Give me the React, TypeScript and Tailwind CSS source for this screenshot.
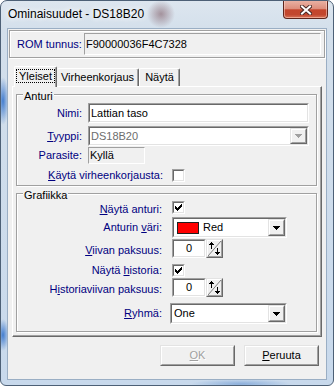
import React from "react";

const etched =
  "border border-[#a0a0a0] shadow-[1px_1px_0_#ffffff,inset_1px_1px_0_#ffffff]";

function U({ children }: { children: React.ReactNode }) {
  return <span className="underline decoration-1 underline-offset-[1px]">{children}</span>;
}

function Sunken({
  className = "",
  inner = "",
  children,
}: {
  className?: string;
  inner?: string;
  children?: React.ReactNode;
}) {
  return (
    <div
      className={`border border-t-[#a0a0a0] border-l-[#a0a0a0] border-r-white border-b-white ${className}`}
    >
      <div
        className={`w-full h-full border border-t-[#696969] border-l-[#696969] border-r-[#e3e3e3] border-b-[#e3e3e3] flex items-center ${inner}`}
      >
        {children}
      </div>
    </div>
  );
}

function Raised({
  className = "",
  children,
}: {
  className?: string;
  children?: React.ReactNode;
}) {
  return (
    <div
      className={`border border-t-[#e3e3e3] border-l-[#e3e3e3] border-r-[#696969] border-b-[#696969] bg-[#f0f0f0] ${className}`}
    >
      <div className="w-full h-full border border-t-white border-l-white border-r-[#a0a0a0] border-b-[#a0a0a0] flex items-center justify-center">
        {children}
      </div>
    </div>
  );
}

function Arrow({ color = "#000000" }: { color?: string }) {
  return (
    <svg width="7" height="4" viewBox="0 0 7 4" shapeRendering="crispEdges">
      <rect x="0" y="0" width="7" height="1" fill={color} />
      <rect x="1" y="1" width="5" height="1" fill={color} />
      <rect x="2" y="2" width="3" height="1" fill={color} />
      <rect x="3" y="3" width="1" height="1" fill={color} />
    </svg>
  );
}

function Check({ checked }: { checked?: boolean }) {
  return (
    <Sunken className="w-[13px] h-[13px] bg-white" inner="justify-center">
      {checked && (
        <svg width="7" height="7" viewBox="0 0 7 7" shapeRendering="crispEdges">
          <rect x="6" y="0" width="1" height="1" fill="#000" />
          <rect x="5" y="1" width="2" height="1" fill="#000" />
          <rect x="0" y="2" width="1" height="1" fill="#000" />
          <rect x="4" y="2" width="3" height="1" fill="#000" />
          <rect x="0" y="3" width="2" height="1" fill="#000" />
          <rect x="3" y="3" width="3" height="1" fill="#000" />
          <rect x="0" y="4" width="5" height="1" fill="#000" />
          <rect x="1" y="5" width="3" height="1" fill="#000" />
          <rect x="2" y="6" width="1" height="1" fill="#000" />
        </svg>
      )}
    </Sunken>
  );
}

function Spin({ value }: { value: string }) {
  return (
    <div className="flex h-[19px]">
      <Sunken className="w-[34px] h-[19px] bg-white" inner="justify-center">
        <span>{value}</span>
      </Sunken>
      <Raised className="w-[17px] h-[19px]">
        <svg width="13" height="15" viewBox="0 0 13 15" shapeRendering="crispEdges">
          <line x1="0" y1="15" x2="13" y2="0" stroke="#808080" strokeWidth="1" shapeRendering="auto" />
          <rect x="3" y="1" width="1" height="1" fill="#000" />
          <rect x="2" y="2" width="3" height="1" fill="#000" />
          <rect x="1" y="3" width="5" height="1" fill="#000" />
          <rect x="3" y="4" width="1" height="4" fill="#000" />
          <rect x="9" y="7" width="1" height="4" fill="#000" />
          <rect x="7" y="11" width="5" height="1" fill="#000" />
          <rect x="8" y="12" width="3" height="1" fill="#000" />
          <rect x="9" y="13" width="1" height="1" fill="#000" />
        </svg>
      </Raised>
    </div>
  );
}

function Group({
  title,
  className = "",
  children,
}: {
  title: string;
  className?: string;
  children?: React.ReactNode;
}) {
  return (
    <div className={`relative flex flex-col ${etched} ${className}`}>
      <div className="absolute left-[6px] -top-[5px] px-[1px] bg-[#f0f0f0] leading-[13px]">
        {title}
      </div>
      {children}
    </div>
  );
}

const label = "text-right text-[#000080] shrink-0";

export default function App() {
  return (
    <div className="w-[334px] h-[386px] font-['Liberation_Sans',Arial,sans-serif] text-[11px] leading-[13px] text-black">
      <div className="w-full h-full flex flex-col rounded-t-[7px] rounded-b-[6px] border border-[#4d6076] overflow-hidden [background:radial-gradient(ellipse_14px_14px_at_160px_13px,rgba(120,80,90,0.55),transparent),radial-gradient(ellipse_6px_24px_at_2px_100px,rgba(60,120,205,0.95),transparent),radial-gradient(ellipse_6px_16px_at_2px_334px,rgba(60,120,205,0.95),transparent),radial-gradient(ellipse_50px_5px_at_240px_383px,rgba(90,140,205,0.55),transparent),linear-gradient(180deg,#dde6ef_0px,#d3dfeb_30px,#c8d9ec_100%)]">
        {/* Title bar */}
        <div className="h-[28px] flex items-start shrink-0">
          <div className="pl-[7px] pt-[6px] text-[12px] leading-[14px] text-black [text-shadow:0_0_6px_#ffffff,0_0_6px_#ffffff]">
            Ominaisuudet - DS18B20
          </div>
          <div className="ml-auto mr-[5px] w-[45px] h-[18px] rounded-b-[4px] border border-t-0 border-[#5e251c] flex items-center justify-center [background:linear-gradient(180deg,#e9b0a2_0%,#dd8e7c_45%,#c4452c_52%,#c2472e_80%,#d7735a_100%)] shadow-[inset_0_-1px_0_rgba(255,200,180,0.6),inset_1px_0_0_rgba(255,220,210,0.5),inset_-1px_0_0_rgba(255,220,210,0.5)]">
            <svg width="12" height="10" viewBox="0 0 12 10">
              <path d="M2 1.5 L10 8.5 M10 1.5 L2 8.5" stroke="#4a2a26" strokeWidth="4" strokeLinecap="square" />
              <path d="M2 1.5 L10 8.5 M10 1.5 L2 8.5" stroke="#ffffff" strokeWidth="2" strokeLinecap="square" />
            </svg>
          </div>
        </div>

        {/* Client area */}
        <div className="mx-[7px] h-[350px] shrink-0 bg-[#f0f0f0] flex flex-col shadow-[0_0_0_1px_#9aaec4]">
          {/* ROM panel */}
          <div className={`mt-[1px] mx-[1px] h-[28px] flex items-center pl-[7px] ${etched}`}>
            <div className="w-[67px] text-[#000080] shrink-0">ROM tunnus:</div>
            <div className="w-[237px] h-[22px] border border-t-[#a0a0a0] border-l-[#a0a0a0] border-r-white border-b-white flex items-center pl-[1px]">
              F90000036F4C7328
            </div>
          </div>

          {/* Tabs */}
          <div className="mt-[8px] ml-[4px] h-[20px] flex items-end pl-[2px]">
            <div className="relative z-10 -mb-[1px] w-[43px] h-[21px] bg-[#f0f0f0] rounded-t-[2px] border-t border-l border-r border-t-white border-l-white border-r-[#696969] shadow-[inset_-1px_0_0_#a0a0a0] flex items-start justify-center pt-[2px]">
              <div className="border border-dotted border-black px-[2px] h-[14px] leading-[12px]">Yleiset</div>
            </div>
            <div className="w-[82px] h-[18px] rounded-t-[2px] border-t border-r border-t-white border-r-[#696969] shadow-[inset_-1px_0_0_#a0a0a0] flex items-center justify-center">
              Virheenkorjaus
            </div>
            <div className="w-[41px] h-[18px] rounded-t-[2px] border-t border-l border-r border-t-white border-l-white border-r-[#696969] shadow-[inset_-1px_0_0_#a0a0a0] flex items-center justify-center">
              Näytä
            </div>
          </div>

          {/* Tab panel */}
          <div className="ml-[4px] w-[310px] h-[251px] shrink-0 border border-t-white border-l-white border-r-[#696969] border-b-[#696969] shadow-[inset_-1px_-1px_0_#a0a0a0] flex flex-col">
            <Group title="Anturi" className="ml-[3px] mt-[7px] w-[301px] h-[92px] shrink-0">
              <div className="mt-[8px] h-[20px] flex items-center">
                <div className={`${label} w-[65px]`}>Nimi:</div>
                <Sunken className="ml-[6px] w-[221px] h-[20px] bg-white" inner="pl-[1px]">
                  Lattian taso
                </Sunken>
              </div>
              <div className="mt-[3px] h-[20px] flex items-center">
                <div className={`${label} w-[65px]`}>
                  <U>T</U>yyppi:
                </div>
                <Sunken className="ml-[6px] w-[221px] h-[20px] bg-white" inner="pl-[1px]">
                  <span className="text-[#6d6d6d]">DS18B20</span>
                  <Raised className="ml-auto w-[17px] h-[16px]">
                    <Arrow color="#a0a0a0" />
                  </Raised>
                </Sunken>
              </div>
              <div className="mt-[1px] h-[17px] flex items-center">
                <div className={`${label} w-[65px]`}>Parasite:</div>
                <div className="ml-[6px] w-[57px] h-[17px] border border-t-[#a0a0a0] border-l-[#a0a0a0] border-r-white border-b-white flex items-center pl-[1px]">
                  Kyllä
                </div>
              </div>
              <div className="mt-[5px] h-[13px] flex items-center">
                <div className={`${label} w-[146px]`}>
                  <U>K</U>äytä virheenkorjausta:
                </div>
                <div className="ml-[9px]">
                  <Check />
                </div>
              </div>
            </Group>

            <Group title="Grafiikka" className="ml-[3px] mt-[7px] w-[301px] h-[139px] shrink-0">
              <div className="mt-[7px] h-[13px] flex items-center">
                <div className={`${label} w-[145px] pt-[3px]`}>
                  <U>N</U>äytä anturi:
                </div>
                <div className="ml-[10px]">
                  <Check checked />
                </div>
              </div>
              <div className="mt-[3px] h-[21px] flex items-center">
                <div className={`${label} w-[145px]`}>
                  Anturin <U>v</U>äri:
                </div>
                <Sunken className="ml-[10px] w-[115px] h-[21px] bg-white">
                  <div className="ml-[3px] w-[22px] h-[12px] bg-[#ff0000] border border-[#202020]" />
                  <span className="ml-[4px]">Red</span>
                  <Raised className="ml-auto w-[17px] h-[17px]">
                    <Arrow />
                  </Raised>
                </Sunken>
              </div>
              <div className="mt-[1px] h-[19px] flex items-center">
                <div className={`${label} w-[145px] pt-[3px]`}>
                  <U>V</U>iivan paksuus:
                </div>
                <div className="ml-[10px]">
                  <Spin value="0" />
                </div>
              </div>
              <div className="mt-[6px] h-[13px] flex items-center">
                <div className={`${label} w-[145px]`}>
                  Näytä <U>h</U>istoria:
                </div>
                <div className="ml-[10px]">
                  <Check checked />
                </div>
              </div>
              <div className="mt-[1px] h-[19px] flex items-center">
                <div className={`${label} w-[145px] pt-[4px]`}>
                  H<U>i</U>storiaviivan paksuus:
                </div>
                <div className="ml-[10px]">
                  <Spin value="0" />
                </div>
              </div>
              <div className="mt-[6px] h-[21px] flex items-center">
                <div className={`${label} w-[145px]`}>
                  <U>R</U>yhmä:
                </div>
                <Sunken className="ml-[8px] w-[117px] h-[21px] bg-white" inner="pl-[2px]">
                  <span>One</span>
                  <Raised className="ml-auto w-[17px] h-[17px]">
                    <Arrow />
                  </Raised>
                </Sunken>
              </div>
            </Group>
          </div>

          {/* Buttons */}
          <div className="mt-[8px] h-[21px] flex justify-end gap-[9px] pr-[7px]">
            <Raised className="w-[75px] h-[21px]">
              <span className="text-[#a0a0a0] [text-shadow:1px_1px_0_#ffffff]">
                <U>O</U>K
              </span>
            </Raised>
            <Raised className="w-[75px] h-[21px]">
              <span>
                <U>P</U>eruuta
              </span>
            </Raised>
          </div>
        </div>
      </div>
    </div>
  );
}
